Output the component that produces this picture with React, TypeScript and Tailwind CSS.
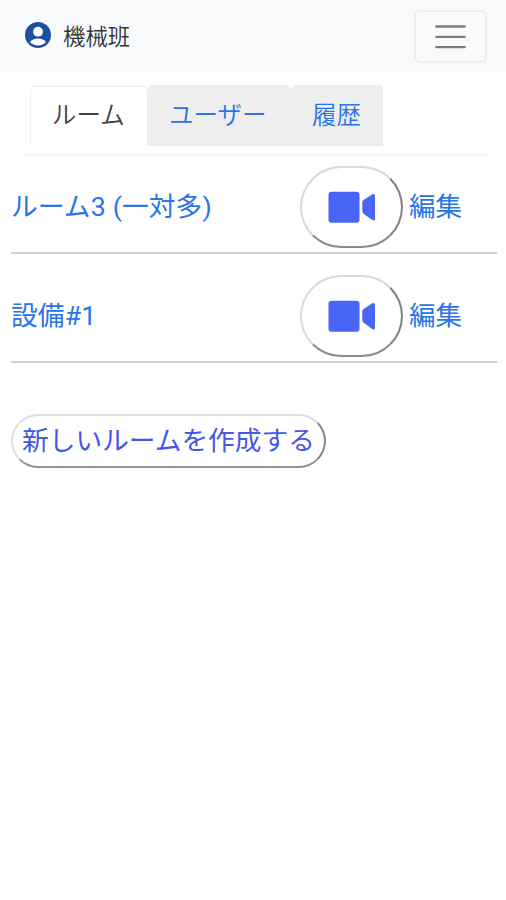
import React from "react";

interface Room {
  id: string;
  name: string;
}

const rooms: Room[] = [
  { id: "room-3", name: "ルーム3 (一対多)" },
  { id: "equipment-1", name: "設備#1" },
];

function UserIcon() {
  return (
    <svg width="26" height="26" viewBox="0 0 26 26" aria-hidden="true">
      <circle cx="13" cy="13" r="13" fill="#1d51a0" />
      <circle cx="13" cy="9.7" r="4.9" fill="#fff" />
      <path d="M5 20C6.200 17.800 9.700 16.600 13 16.600s6.800 1.200 8 3.400c-1.800 2.300-4.700 3.500-8 3.500s-6.200-1.200-8-3.500z" fill="#fff" />
    </svg>
  );
}

function MenuIcon() {
  return (
    <svg width="31" height="24" viewBox="0 0 31 24" stroke="#7c7d7f" strokeWidth="2.300" strokeLinecap="round" aria-hidden="true">
      <path d="M1.200 1.500H29.800M1.200 11.800H29.800M1.200 22.100H29.800" />
    </svg>
  );
}

function VideoIcon() {
  return (
    <svg width="48" height="32" viewBox="0 0 48 32" fill="#4a64f6" aria-hidden="true">
      <rect x="0.500" y="0.700" width="31" height="31" rx="3" />
      <path d="M35.400 9.200 43.800 3.600Q47 1.800 47 4.500V28Q47 30.600 43.800 28.800L35.400 22.600Q34.300 21.700 34.300 20V11.500Q34.300 10 35.400 9.200z" />
    </svg>
  );
}

function RoomRow({ name }: { name: string }) {
  return (
    <div className="flex h-[88px] items-start border-b-2 border-[#d0d0d0]">
      <a href="#" className="mt-[21px] w-[289px] leading-[40px] tracking-[0.150px] text-[#2874e8]">
        {name}
      </a>
      <button
        aria-label="ビデオ通話"
        className="flex h-[82px] w-[103px] items-center justify-center rounded-[42px] border-2 border-t-[#d9d9d9] border-l-[#d9d9d9] border-r-[#808080] border-b-[#8c8c8c] bg-white"
      >
        <VideoIcon />
      </button>
      <a href="#" className="mt-[21px] ml-1.5 text-[26.500px] leading-[40px] text-[#2874e8]">
        編集
      </a>
    </div>
  );
}

export default function App() {
  return (
    <div className="min-h-[900px] w-[506px] bg-white font-[Roboto,'Noto_Sans_CJK_JP',sans-serif] text-[26.700px]">
      {/* ヘッダー */}
      <header className="flex h-[73px] items-center bg-[#f8fafc] pr-[19px] pl-[25px]">
        <div className="-mt-1">
          <UserIcon />
        </div>
        <span className="ml-3 text-[22.400px] leading-[32px] font-[350] text-[#333]">機械班</span>
        <button
          aria-label="メニュー"
          className="ml-auto flex h-[53px] w-[73px] items-center justify-center rounded-[6px] border-2 border-[#eceef0]"
        >
          <MenuIcon />
        </button>
      </header>

      {/* タブ */}
      <nav className="mr-4 ml-[22px] flex h-[83px] items-start border-b-2 border-[#f5f5f5] pt-3 pl-2 text-[24.500px] leading-[58px] font-[350]">
        <a href="#" className="h-[61px] w-[117px] rounded-t-[5px] border-t-2 border-l border-[#f0f0f0] pl-[21px] text-[#404040]">
          ルーム
        </a>
        <a href="#" className="h-[61px] w-[144px] rounded-t-[5px] bg-[#eee] pt-0.5 pl-[22px] text-[#2874e8]">
          ユーザー
        </a>
        <a href="#" className="h-[61px] w-[92px] rounded-t-[5px] bg-[#eee] pt-0.5 pl-[21px] text-[#2874e8]">
          履歴
        </a>
      </nav>

      {/* ルーム一覧 */}
      <main className="pr-[9px] pl-[11px]">
        <div className="flex flex-col gap-[21px] pt-[10px]">
          {rooms.map((room) => (
            <RoomRow key={room.id} name={room.name} />
          ))}
        </div>

        <button className="mt-[51px] flex h-[54px] w-[315px] items-center justify-center rounded-full border-2 border-t-[#dedede] border-l-[#dedede] border-r-[#858585] border-b-[#929292] bg-white whitespace-nowrap text-[#4657e5]">
          新しいルームを作成する
        </button>
      </main>
    </div>
  );
}
